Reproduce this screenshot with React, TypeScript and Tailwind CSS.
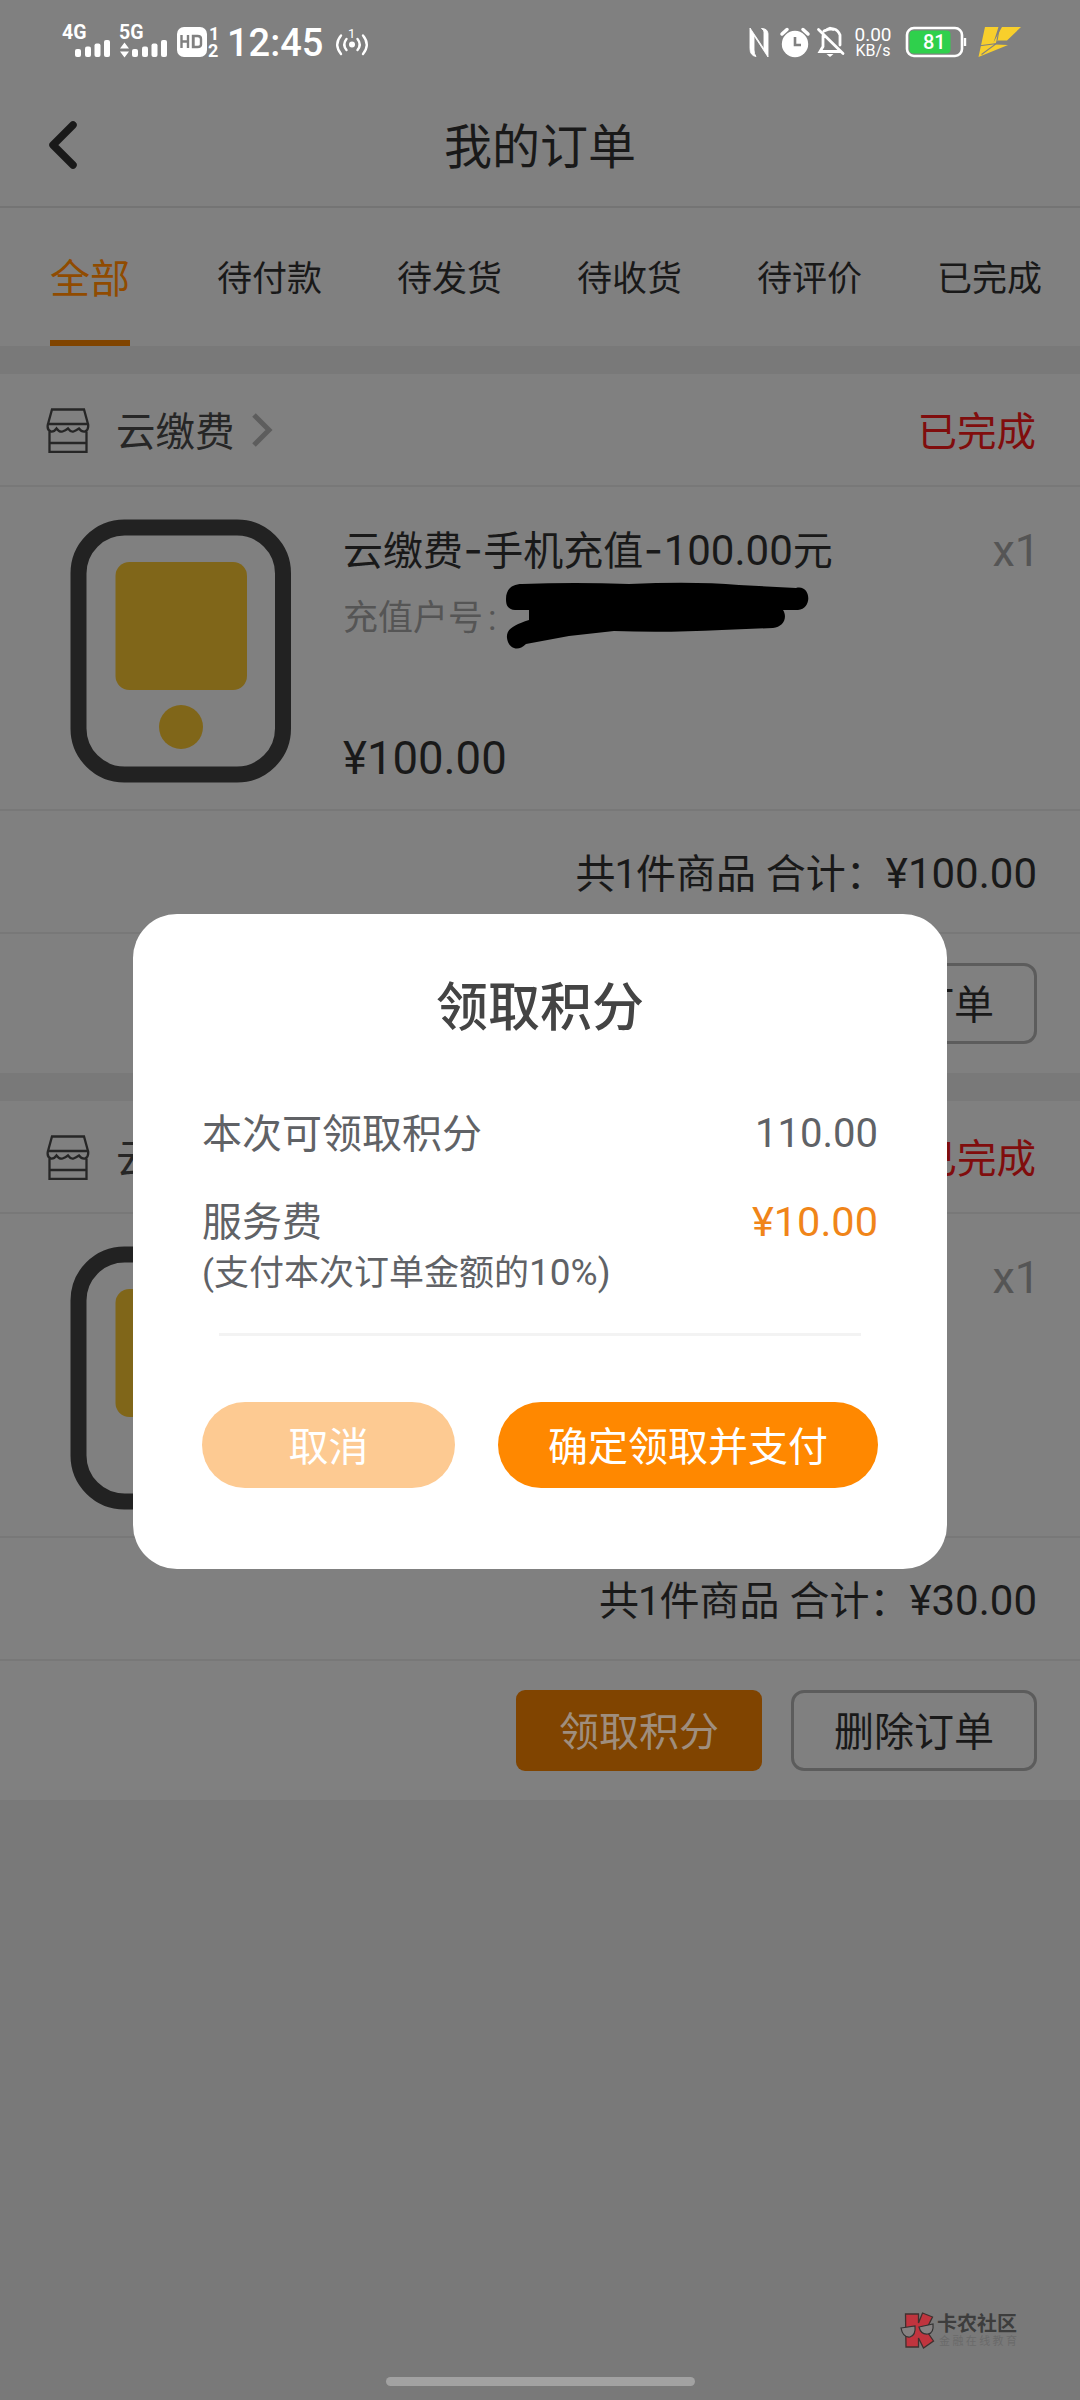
import React from 'react';

function Bars() {
  return (
    <svg width="36" height="17" viewBox="0 0 36 17" fill="#fff">
      <rect x="0" y="9" width="6" height="8" rx="2" />
      <rect x="10" y="6.500" width="6" height="10.500" rx="2" />
      <rect x="19.500" y="3.500" width="6" height="13.500" rx="2" />
      <rect x="29" y="0" width="6" height="17" rx="2" />
    </svg>
  );
}

function StatusBar() {
  return (
    <div className="relative flex h-[84px] w-full text-white">
      <svg className="absolute left-0 top-0" width="1080" height="84" viewBox="0 0 1080 84" fill="none">
        <path d="M120 48.500l4.500-6 4.500 6zM120 51.500l4.500 6 4.500-6z" fill="#fff" />
        <rect x="177" y="27" width="30" height="30" rx="7" fill="#fff" />
        <path d="M181.500 35v13M188 35v13M181.500 41.500h6.500M193.500 36v11.500M193 36h4.500q3.500 0 3.500 3v5.500q0 2.500-3.500 2.500h-4.500z" stroke="#808080" strokeWidth="2.400" />
        <circle cx="352" cy="44.500" r="3" fill="#fff" />
        <path d="M346.500 39q-4.500 5.500 0 11M341 35.500q-7.500 9 0 18.500M357.500 39q4.500 5.500 0 11M363 35.500q7.500 9 0 18.500" stroke="#fff" strokeWidth="2.400" strokeLinecap="round" />
        <path d="M756 56.500q-6-1-6-8V28l14 21V32q0-2-2.500-3.500 6 0 6.500 5V57l-14-21.500V50q0 4 2 6.500z" fill="#fff" stroke="#fff" strokeWidth="0.900" />
        <circle cx="795" cy="44" r="13.200" fill="#fff" />
        <path d="M795 37v8h6" stroke="#808080" strokeWidth="2.600" />
        <path d="M782 34l5-4.500M808 34l-5-4.500" stroke="#fff" strokeWidth="3.500" strokeLinecap="round" />
        <path d="M818.500 29.500l24.500 24M823 36v10.500l-3 5h19M824 31q12-6 16 4v10M827 29.500l3-1.200 3 1.200" stroke="#fff" strokeWidth="2.800" strokeLinecap="round" />
        <path d="M826.500 54h7l-3.500 3z" fill="#fff" />
        <rect x="907" y="28" width="55" height="28" rx="7" stroke="#fff" strokeWidth="2.600" />
        <rect x="909.500" y="30.500" width="41" height="23" rx="4" fill="#2fd04c" />
        <path d="M965 38v8" stroke="#fff" strokeWidth="2.400" />
        <path d="M985 27h13.500l-5 15.500L1002 27h19l-14 13.500h-9l-3.500 4 13.500.500L978.500 57z" fill="#f8cf2c" />
        <path d="M978 46l19-2.500M981.500 54.500l15-11 3-16.500" stroke="#808080" strokeWidth="1.100" />
      </svg>
      <span className="absolute left-[62px] top-[23px] font-['Roboto'] text-[19.500px] font-bold leading-[20px]">4G</span>
      <div className="absolute left-[75px] top-[40px]"><Bars /></div>
      <span className="absolute left-[119px] top-[23px] font-['Roboto'] text-[19.500px] font-bold leading-[20px]">5G</span>
      <div className="absolute left-[132px] top-[40px]"><Bars /></div>
      <div className="absolute left-[208px] top-[25px] font-['Roboto'] text-[18px] font-bold">
        <div className="pl-[1px] leading-[17px]">1</div>
        <div className="leading-[17px]">2</div>
      </div>
      <span className="absolute left-[227px] top-[24px] font-['Roboto'] text-[38px] font-medium leading-[38px]">12:45</span>
      <span className="absolute left-[348px] top-[27px] font-['Roboto'] text-[13px] leading-[14px]">1</span>
      <div className="absolute left-[852px] top-[26px] w-[42px] text-center font-['Roboto']">
        <div className="text-[19px] leading-[17px]">0.00</div>
        <div className="text-[16px] leading-[16px]">KB/s</div>
      </div>
      <span className="absolute left-[923px] top-[32px] font-['Roboto'] text-[20px] font-medium leading-[21px]">81</span>
    </div>
  );
}

function StoreIcon() {
  return (
    <svg className="mt-[2px]" width="44" height="45" viewBox="0 0 44 45" fill="none" stroke="#262626" strokeWidth="2.300">
      <path d="M6 1.500h32l4 14.500H2zM2 16q-1.500 6 3 7.500q3 .5 5.500-3q3 4 6 3t5.500-3q3 4 5.500 3t5.500-3q2.500 3.500 6 3q4-1.500 3-7.500M3.500 23.500V44h37V23.500M3.500 35h37" />
    </svg>
  );
}

function PhonePicture() {
  return (
    <svg className="shrink-0" width="224" height="267" viewBox="0 0 224 267">
      <rect x="9.500" y="10.500" width="204.500" height="247" rx="46" fill="none" stroke="#222" strokeWidth="16" />
      <rect x="46.500" y="45" width="131.500" height="128" rx="14" fill="#806619" />
      <circle cx="112" cy="210" r="22" fill="#806619" />
    </svg>
  );
}

function Dash() {
  return <span className="mx-[0.5px] font-['Inter'] text-[42px]">-</span>;
}

function OrderDetails({ amount }: { amount: string }) {
  return (
    <div>
      <div className="mt-[11px] whitespace-nowrap text-[40px] leading-[44px] text-[#191919]">
        云缴费<Dash />手机充值<Dash /><span className="text-[42px]">{amount}</span>元
      </div>
      <div className="relative mt-[25px] text-[35px] leading-[40px] text-[#555]">
        充值户号<span className="ml-[5px]">:</span>
        <svg className="absolute -top-[18px] left-[161px]" width="310" height="68" viewBox="0 0 310 68" fill="#000">
          <path d="M2 18C2 8 8 3 18 3Q70 1 125 3Q190 0 235 4L292 7C307 3 309 28 294 29L279 29C284 37 279 46 269 47L218 49Q160 52 110 50L65 55L22 63C13 72 4 66 3 57C2 48 10 44 25 39L25 29L11 29C4 28 2 25 2 18Z" />
        </svg>
      </div>
      <div className="mt-[95px] text-[45.500px] leading-[50px] text-[#191919]">¥{amount}</div>
    </div>
  );
}

function Order({ amount, details, claim }: { amount: string; details?: boolean; claim?: boolean }) {
  return (
    <section className="h-[727px] border-b-[28px] border-[#797979] bg-[#808080]">
      <div className="flex h-[113px] items-center border-b-2 border-[#787878] pl-[46px] pr-[44px]">
        <StoreIcon />
        <span className="ml-[26px] pt-[7px] text-[39.500px] leading-none text-[#262626]">云缴费</span>
        <svg className="ml-[16px]" width="24" height="36" viewBox="0 0 24 36" fill="none" stroke="#5d5d5d" strokeWidth="5">
          <path d="M3 3l15 15L3 33" />
        </svg>
        <span className="ml-auto pt-[7px] text-[39.500px] leading-none text-[#800d0d]">已完成</span>
      </div>
      <div className="flex h-[324px] border-b-2 border-[#787878] pl-[69px] pr-[40px] pt-[30px]">
        <PhonePicture />
        <div className="ml-[50px] flex-1">{details && <OrderDetails amount={amount} />}</div>
        <span className="mt-[12px] text-[45px] leading-[44px] text-[#555]">x1</span>
      </div>
      <div className="flex h-[123px] items-center justify-end border-b-2 border-[#787878] pr-[43px] pt-[4px] text-[40px] text-[#191919]">
        <span className="whitespace-pre pt-[2px]">共<span className="-mx-[1px]">1</span>件商品 合计：</span>
        <span className="text-[42px]">¥{amount}</span>
      </div>
      <div className="flex h-[139px] items-center justify-end gap-[29px] pr-[43px] text-[40px]">
        {claim && (
          <div className="flex h-[81px] w-[246px] items-center justify-center rounded-[9px] bg-[#804400] pt-[5px] text-[#9f8e7e]">领取积分</div>
        )}
        <div className="flex h-[81px] w-[246px] items-center justify-center rounded-[13px] border-[3px] border-[#5c5c5c] pt-[5px] text-[#191919]">删除订单</div>
      </div>
    </section>
  );
}

function Modal() {
  return (
    <div className="absolute left-[133px] top-[914px] flex h-[655px] w-[814px] flex-col rounded-[44px] bg-white px-[69px] text-[#606266]">
      <h2 className="mt-[65px] text-center text-[52px] font-medium leading-[60px] text-[#444]">领取积分</h2>
      <div className="mt-[71px] flex justify-between text-[40px] leading-[50px]">
        <span>本次可领取积分</span>
        <span className="-mt-[1px]">110.00</span>
      </div>
      <div className="mt-[38px] flex justify-between text-[40px] leading-[50px]">
        <span>服务费</span>
        <span className="-mt-[1px] text-[41.500px] text-[#f08519]">¥10.00</span>
      </div>
      <div className="text-[35px] leading-[50px]">
        (支付本次订单金额的<span className="text-[37px]">10%)</span>
      </div>
      <div className="mx-[17px] mt-[34px] h-[3px] bg-[#f3f3f3]" />
      <div className="mt-[66px] flex justify-between text-[40px] text-white">
        <div className="flex h-[86px] w-[253px] items-center justify-center rounded-full bg-[#fdca92] pt-[5px]">取消</div>
        <div className="flex h-[86px] w-[380px] items-center justify-center rounded-full bg-[#ff8800] pt-[5px]">确定领取并支付</div>
      </div>
    </div>
  );
}

function Watermark() {
  return (
    <div className="absolute left-[899px] top-[2311px] flex">
      <svg width="36" height="38" viewBox="0 0 36 38">
        <path d="M6.500 3h13v9l4-10 10 4-6.500 13 7.500 11-10 7-5-10v9H7z" fill="#c0343e" stroke="#40302f" strokeWidth="1.300" />
        <path d="M2 17l14-2q1 9-5 11-7 1-9-9zM20 16l14-3q1 9-5 10-7 1-9-7z" fill="#858181" stroke="#333" strokeWidth="1.200" />
      </svg>
      <div className="ml-[2px] w-[84px]">
        <div className="mt-[3px] text-[20px] font-bold leading-[20px] text-[#3d3d3d]">卡农社区</div>
        <div className="mt-[2px] whitespace-nowrap pl-[2px] text-[11px] leading-[12px] tracking-[2.400px] text-[#6a6a6a]">金融在线教育</div>
      </div>
    </div>
  );
}

const tabs = ['待付款', '待发货', '待收货', '待评价', '已完成'];

export default function App() {
  return (
    <div className="relative h-[2400px] w-[1080px] overflow-hidden bg-[#797979] font-['Roboto','Noto_Sans_CJK_SC',sans-serif]">
      <div className="bg-[#808080]">
        <StatusBar />
        <header className="relative flex h-[124px] items-center justify-center border-b-2 border-[#747474] pt-[5px] text-[48px] text-[#191919]">
          <svg className="absolute left-[46px] top-[34px]" width="34" height="54" viewBox="0 0 34 54" fill="none" stroke="#191919" strokeWidth="7.500" strokeLinecap="round" strokeLinejoin="round">
            <path d="M27 7L7 27l20 20" />
          </svg>
          <span>我的订单</span>
        </header>
        <nav className="flex h-[138px] pl-[50px] text-[#191919]">
          <div className="mr-[87px] flex w-[80px] items-center justify-center border-b-[6px] border-[#804400] pt-[11px] text-[40px] text-[#904b00]">全部</div>
          <div className="flex gap-[75px]">
            {tabs.map((t) => (
              <span key={t} className="flex w-[105px] items-center whitespace-nowrap pt-[6px] text-[35px]">{t}</span>
            ))}
          </div>
        </nav>
      </div>
      <div className="h-[28px]" />
      <Order amount="100.00" details />
      <Order amount="30.00" claim />
      <Modal />
      <Watermark />
      <div className="absolute left-[386px] top-[2377px] h-[9px] w-[309px] rounded-full bg-[#a2a2a2]" />
    </div>
  );
}
